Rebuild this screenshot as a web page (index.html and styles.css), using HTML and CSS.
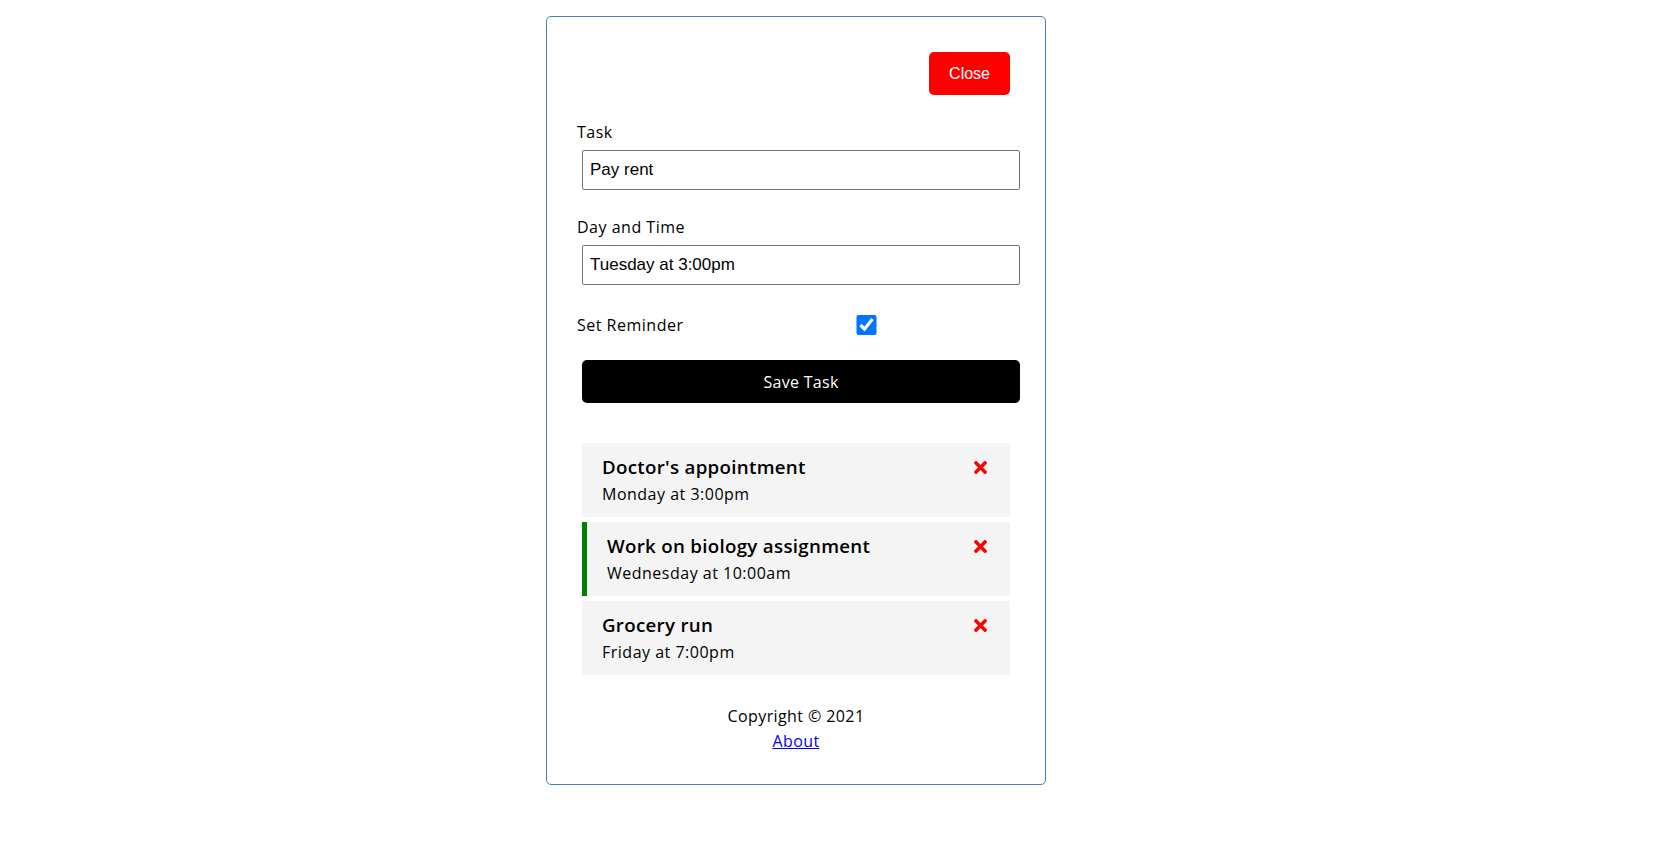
FILE: index.html
```html
<!DOCTYPE html>
<html lang="en">
<head>
    <meta charset="UTF-8">
    <meta name="viewport" content="width=device-width, initial-scale=1.0">
    <title>Task Tracker</title>
    <link rel="stylesheet" href="styles.css">
</head>
<body>

    <div class="container">

        <!-- Header -->
        <header class="header">
            <button class="btn btn-close">Close</button>
        </header>

        <!-- Add Task Form -->
        <form class="add-form" onsubmit="return false">
            <div class="form-control">
                <label>Task</label>
                <input type="text" value="Pay rent">
            </div>
            <div class="form-control">
                <label>Day and Time</label>
                <input type="text" value="Tuesday at 3:00pm">
            </div>
            <div class="form-control form-control-check">
                <label>Set Reminder</label>
                <input type="checkbox" checked>
            </div>
            <input type="submit" value="Save Task" class="btn btn-block">
        </form>

        <!-- Tasks -->
        <div class="tasks">
            <div class="task">
                <h3>Doctor's appointment
                    <svg class="delete" viewBox="0 0 352 512"><path d="M242.72 256l100.07-100.07c12.28-12.28 12.28-32.19 0-44.48l-22.24-22.24c-12.28-12.28-32.19-12.28-44.48 0L176 189.28 75.93 89.21c-12.28-12.28-32.19-12.28-44.48 0L9.21 111.45c-12.28 12.28-12.28 32.19 0 44.48L109.28 256 9.21 356.07c-12.28 12.28-12.28 32.19 0 44.48l22.24 22.24c12.28 12.28 32.2 12.28 44.48 0L176 322.72l100.07 100.07c12.28 12.28 32.2 12.28 44.48 0l22.24-22.24c12.28-12.28 12.28-32.19 0-44.48L242.72 256z"/></svg>
                </h3>
                <p>Monday at 3:00pm</p>
            </div>
            <div class="task reminder">
                <h3>Work on biology assignment
                    <svg class="delete" viewBox="0 0 352 512"><path d="M242.72 256l100.07-100.07c12.28-12.28 12.28-32.19 0-44.48l-22.24-22.24c-12.28-12.28-32.19-12.28-44.48 0L176 189.28 75.93 89.21c-12.28-12.28-32.19-12.28-44.48 0L9.21 111.45c-12.28 12.28-12.28 32.19 0 44.48L109.28 256 9.21 356.07c-12.28 12.28-12.28 32.19 0 44.48l22.24 22.24c12.28 12.28 32.2 12.28 44.48 0L176 322.72l100.07 100.07c12.28 12.28 32.2 12.28 44.48 0l22.24-22.24c12.28-12.28 12.28-32.19 0-44.48L242.72 256z"/></svg>
                </h3>
                <p>Wednesday at 10:00am</p>
            </div>
            <div class="task">
                <h3>Grocery run
                    <svg class="delete" viewBox="0 0 352 512"><path d="M242.72 256l100.07-100.07c12.28-12.28 12.28-32.19 0-44.48l-22.24-22.24c-12.28-12.28-32.19-12.28-44.48 0L176 189.28 75.93 89.21c-12.28-12.28-32.19-12.28-44.48 0L9.21 111.45c-12.28 12.28-12.28 32.19 0 44.48L109.28 256 9.21 356.07c-12.28 12.28-12.28 32.19 0 44.48l22.24 22.24c12.28 12.28 32.2 12.28 44.48 0L176 322.72l100.07 100.07c12.28 12.28 32.2 12.28 44.48 0l22.24-22.24c12.28-12.28 12.28-32.19 0-44.48L242.72 256z"/></svg>
                </h3>
                <p>Friday at 7:00pm</p>
            </div>
        </div>

        <!-- Footer -->
        <footer class="footer">
            <p>Copyright &copy; 2021</p>
            <a href="#">About</a>
        </footer>

    </div>

</body>
</html>
```

FILE: styles.css
```css
* {
    box-sizing: border-box;
    margin: 0;
    padding: 0;
}

body {
    font-family: "Open Sans", "Liberation Sans", sans-serif;
    color: #000;
    background: #fff;
}

.container {
    width: 500px;
    margin: 16px 0 0 546px;
    border: 1px solid steelblue;
    border-radius: 5px;
    padding: 30px;
}

/* Header */
.header {
    display: flex;
    justify-content: flex-end;
    align-items: center;
    margin-bottom: 20px;
}

.btn {
    display: inline-block;
    background: #000;
    color: #fff;
    border: none;
    margin: 5px;
    border-radius: 5px;
    cursor: pointer;
    font-size: 16px;
    letter-spacing: 0.3px;
    font-family: inherit;
}

.btn-close {
    background: red;
    font-family: "Liberation Sans", Arial, sans-serif;
    letter-spacing: 0;
    height: 43px;
    padding: 0 20px;
}

.btn-block {
    display: block;
    width: 100%;
    height: 43px;
}

/* Form */
.add-form {
    margin-bottom: 40px;
}

.form-control {
    margin: 20px 0;
}

.form-control label {
    display: block;
    font-size: 16px;
    letter-spacing: 0.5px;
    line-height: 25px;
}

.form-control input {
    width: 100%;
    height: 40px;
    margin: 5px;
    padding: 3px 7px;
    font-size: 17px;
    font-family: "Liberation Sans", Arial, sans-serif;
    border: 1px solid #767676;
    border-radius: 2px;
}

.form-control-check {
    display: flex;
    align-items: center;
    justify-content: space-between;
}

.form-control-check label {
    flex: 1;
}

.form-control-check input {
    flex: 2;
    height: 20px;
    margin: 5px 4px 5px 0;
    accent-color: #0075ff;
}

/* Tasks */
.task {
    background: #f4f4f4;
    margin: 5px;
    padding: 10px 20px;
    cursor: pointer;
}

.task.reminder {
    border-left: 5px solid green;
}

.task h3 {
    display: flex;
    align-items: center;
    justify-content: space-between;
    font-size: 18.72px;
    font-weight: 600;
    letter-spacing: 0.3px;
    line-height: 28px;
}

.task p {
    font-size: 16px;
    letter-spacing: 0.5px;
    line-height: 26px;
}

.delete {
    width: 13px;
    height: 19px;
    margin-right: 3px;
    fill: red;
}

/* Footer */
.footer {
    margin-top: 29px;
    text-align: center;
    font-size: 16px;
    letter-spacing: 0.4px;
    line-height: 24px;
}

.footer a {
    display: block;
    line-height: 26px;
    color: #0000ee;
}
```
